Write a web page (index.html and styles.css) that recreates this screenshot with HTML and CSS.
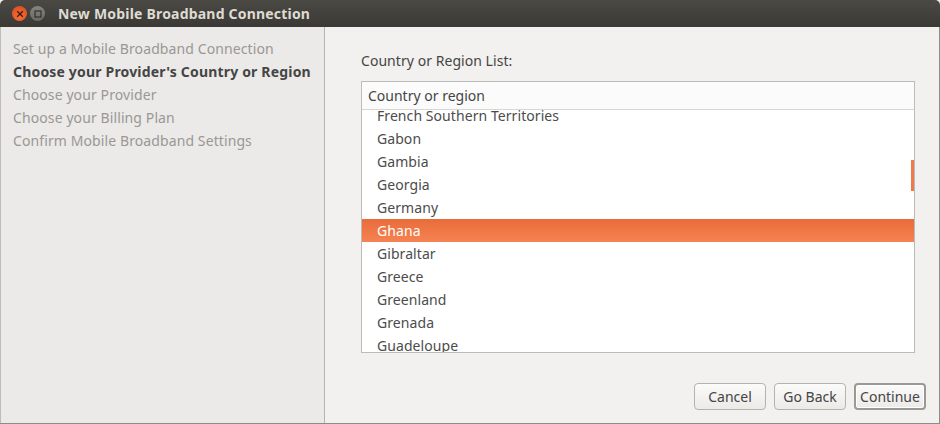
FILE: index.html
```html
<!DOCTYPE html>
<html lang="en">
<head>
<meta charset="utf-8">
<title>New Mobile Broadband Connection</title>
<link rel="stylesheet" href="styles.css">
</head>
<body>
<div class="window">
  <header class="titlebar">
    <span class="winbtn close"><svg viewBox="0 0 8 8" width="8" height="8"><path d="M1.2 1.2L6.8 6.8M6.8 1.2L1.2 6.8" stroke="#3c1a0c" stroke-width="1.3" fill="none"/></svg></span>
    <span class="winbtn max"><svg viewBox="0 0 8 8" width="8" height="8"><rect x="1" y="1" width="6" height="6" stroke="#33322e" stroke-width="1.2" fill="none"/></svg></span>
    <h1 class="title">New Mobile Broadband Connection</h1>
  </header>
  <div class="content">
    <nav class="steps">
      <div class="step">Set up a Mobile Broadband Connection</div>
      <div class="step current">Choose your Provider's Country or Region</div>
      <div class="step">Choose your Provider</div>
      <div class="step">Choose your Billing Plan</div>
      <div class="step">Confirm Mobile Broadband Settings</div>
    </nav>
    <main class="page">
      <div class="label">Country or Region List:</div>
      <div class="list">
        <div class="list-head">Country or region</div>
        <div class="list-body">
          <div class="rows">
            <div class="row">French Southern Territories</div>
            <div class="row">Gabon</div>
            <div class="row">Gambia</div>
            <div class="row">Georgia</div>
            <div class="row">Germany</div>
            <div class="row selected">Ghana</div>
            <div class="row">Gibraltar</div>
            <div class="row">Greece</div>
            <div class="row">Greenland</div>
            <div class="row">Grenada</div>
            <div class="row">Guadeloupe</div>
          </div>
          <div class="thumb"></div>
        </div>
      </div>
      <div class="actions">
        <button class="btn">Cancel</button>
        <button class="btn">Go Back</button>
        <button class="btn default">Continue</button>
      </div>
    </main>
  </div>
</div>
</body>
</html>
```
FILE: styles.css
```css
* { box-sizing: border-box; }
html, body { margin: 0; padding: 0; }
body {
  width: 940px;
  height: 424px;
  overflow: hidden;
  background: #f2f1ef;
  font-family: "Noto Sans", "Open Sans", sans-serif;
  font-size: 14px;
  color: #454545;
}
.window {
  width: 940px;
  height: 424px;
  display: flex;
  flex-direction: column;
  border-bottom: 1px solid #8c8c88;
}
.titlebar {
  height: 27px;
  flex: none;
  display: flex;
  align-items: center;
  padding: 0 0 0 12px;
  background: linear-gradient(#4a4944, #3a3935);
  border-radius: 5px 5px 0 0;
}
.winbtn {
  width: 15px;
  height: 15px;
  border-radius: 50%;
  display: flex;
  align-items: center;
  justify-content: center;
  flex: none;
}
.close {
  background: radial-gradient(circle at 50% 70%, #f4703a, #d8481c);
}
.max {
  margin-left: 3px;
  background: linear-gradient(#85847e, #6a6964);
}
.title {
  margin: 0 0 0 13px;
  font-size: 14px;
  font-weight: 700;
  line-height: 27px;
  letter-spacing: 0.2px;
  color: #dfdbd2;
}
.content {
  flex: 1;
  display: flex;
  min-height: 0;
  border-left: 1px solid #bdbcb8;
  border-right: 1px solid #8c8c88;
}
.steps {
  width: 324px;
  flex: none;
  padding: 10px 0 0 12px;
  background: #ebeae8;
  border-right: 1px solid #b6b5b1;
}
.step {
  height: 23px;
  line-height: 23px;
  letter-spacing: 0.1px;
  color: #9a9794;
  white-space: nowrap;
}
.current {
  font-weight: 700;
  letter-spacing: 0.18px;
  color: #454545;
}
.page {
  flex: 1;
  display: flex;
  flex-direction: column;
  padding: 24px 24px 0 36px;
  min-width: 0;
}
.label {
  height: 20px;
  line-height: 20px;
  letter-spacing: 0.05px;
}
.list {
  margin-top: 10px;
  height: 272px;
  display: flex;
  flex-direction: column;
  background: #fff;
  border: 1px solid #bcbbb7;
}
.list-head {
  height: 28px;
  flex: none;
  padding-left: 6px;
  line-height: 28px;
  background: #fbfbfb;
  border-bottom: 1px solid #d8d7d4;
}
.list-body {
  position: relative;
  flex: 1;
  overflow: hidden;
}
.rows {
  margin-top: -6px;
}
.row {
  height: 23px;
  line-height: 23px;
  padding-left: 15px;
  letter-spacing: 0.07px;
  color: #4c4c4c;
}
.selected {
  background: linear-gradient(#e96c39, #f58353);
  color: #fff;
}
.thumb {
  position: absolute;
  top: 50px;
  right: 0;
  width: 3px;
  height: 31px;
  background: #ee7a4c;
}
.actions {
  display: flex;
  justify-content: flex-end;
  gap: 8px;
  margin-top: 30px;
  margin-right: -11px;
}
.btn {
  width: 72px;
  height: 27px;
  padding: 0;
  font: inherit;
  color: #454545;
  background: linear-gradient(#fbfbfa, #eceae7);
  border: 1px solid #b4b3af;
  border-radius: 4px;
}
.default {
  border: 2px solid #9a9995;
  box-shadow: inset 0 0 0 1px #fff;
}
```
